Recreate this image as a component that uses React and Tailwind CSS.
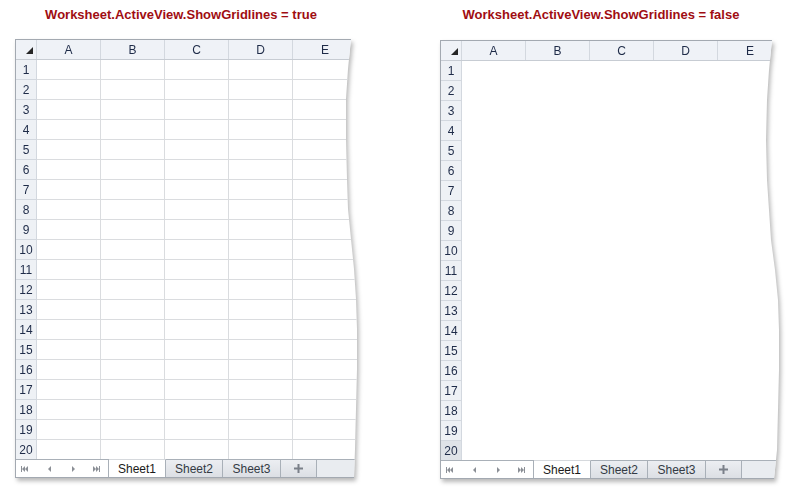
const COLS = ['A', 'B', 'C', 'D', 'E'];
const ROWS = Array.from({ length: 20 }, (_, i) => i + 1);

const CLIP_LEFT =
  '[clip-path:polygon(0_0,336px_0,333px_30px,331px_60px,331px_100px,332px_140px,333px_170px,336px_200px,339px_230px,341px_260px,342px_290px,342px_330px,341px_370px,340px_410px,339px_439px,0_439px)]';
const CLIP_RIGHT =
  '[clip-path:polygon(0_0,332px_0,329px_30px,327px_60px,326px_100px,327px_140px,329px_170px,331px_200px,335px_230px,338px_260px,339px_290px,339px_330px,338px_370px,337px_410px,334px_439px,0_439px)]';

function NavIcon({ kind }) {
  // tiny grey arrows of the sheet tab scroller
  return (
    <svg width="7" height="6" viewBox="0 0 7 6" fill="#8b8f96">
      {kind === 'first' && (
        <>
          <rect x="0" y="0" width="1" height="6" />
          <path d="M1 3 4 0v6z" />
          <path d="M4 3 7 0v6z" />
        </>
      )}
      {kind === 'prev' && <path d="M2 3 5 0v6z" />}
      {kind === 'next' && <path d="M2 0 5 3 2 6z" />}
      {kind === 'last' && (
        <>
          <path d="M0 0 3 3 0 6z" />
          <path d="M3 0 6 3 3 6z" />
          <rect x="6" y="0" width="1" height="6" />
        </>
      )}
    </svg>
  );
}

function Sheet({ gridlines }) {
  return (
    <div className="drop-shadow-[2px_3px_2px_rgba(0,0,0,0.28)]">
      <div
        className={
          (gridlines ? CLIP_LEFT : CLIP_RIGHT) +
          " w-[350px] border border-[#a3a9b1] bg-white overflow-hidden font-['Liberation_Sans',Arial,sans-serif] text-[12px] text-[#1e2b48]"
        }
      >
        {/* column header */}
        <div className="flex h-[20px] border-b border-[#c7ccd3] bg-[#eff2f7]">
          <div className="w-[21px] border-r border-[#d3d8df] flex items-end justify-end pr-[3px] pb-[5px]">
            <svg width="7" height="7" viewBox="0 0 7 7">
              <path d="M0 7 7 0v7z" fill="#262626" />
            </svg>
          </div>
          {COLS.map((c, i) => (
            <div
              key={c}
              className={
                i < 4
                  ? 'w-[64px] border-r border-[#d3d8df] flex items-center justify-center'
                  : 'w-[64px] flex items-center justify-center'
              }
            >
              {c}
            </div>
          ))}
        </div>

        {ROWS.map((r) => {
          const last = r === 20;
          const active = !gridlines && last;
          return (
            <div key={r} className={last ? 'flex h-[19px]' : 'flex h-[20px]'}>
              <div
                className={
                  (active ? 'bg-[#dfe3e8] ' : 'bg-[#eef1f5] ') +
                  (last ? '' : 'border-b ') +
                  'w-[21px] border-r border-[#d3d8df] flex items-center justify-center'
                }
              >
                {r}
              </div>
              {COLS.map((c, i) => (
                <div
                  key={c}
                  className={
                    gridlines
                      ? (last ? '' : 'border-b ') + (i < 4 ? 'border-r ' : '') + 'w-[64px] border-[#dadcdf]'
                      : 'w-[64px]'
                  }
                />
              ))}
            </div>
          );
        })}

        {/* sheet tabs */}
        <div className="flex h-[18px] bg-[#e9ecf0]">
          <div className="w-[93px] border-t border-r border-[#a9b0b8] bg-white flex items-center">
            <div className="ml-[5px]"><NavIcon kind="first" /></div>
            <div className="ml-[18px]"><NavIcon kind="prev" /></div>
            <div className="ml-[17px]"><NavIcon kind="next" /></div>
            <div className="ml-[16px]"><NavIcon kind="last" /></div>
          </div>
          <div className="w-[57px] border-t border-r border-t-[#d6d9dd] border-r-[#a9b0b8] bg-white flex items-center justify-center text-[#1a1a1a]">
            Sheet1
          </div>
          <div className="w-[57px] border-t border-r border-[#a9b0b8] bg-gradient-to-b from-[#eceef2] to-[#dcdfe4] flex items-center justify-center text-[#333a44]">
            Sheet2
          </div>
          <div className="w-[58px] border-t border-r border-[#a9b0b8] bg-gradient-to-b from-[#eceef2] to-[#dcdfe4] flex items-center justify-center text-[#333a44]">
            Sheet3
          </div>
          <div className="w-[36px] border-t border-r border-[#a9b0b8] bg-gradient-to-b from-[#eceef2] to-[#dcdfe4] flex items-center justify-center">
            <svg width="9" height="9" viewBox="0 0 9 9" fill="#7b8089">
              <rect x="3.5" y="0" width="2" height="9" />
              <rect x="0" y="3.5" width="9" height="2" />
            </svg>
          </div>
          <div className="flex-1 border-t border-[#a9b0b8]" />
        </div>
      </div>
    </div>
  );
}

export default function App() {
  return (
    <div className="w-[791px] h-[494px] bg-white flex">
      <div className="ml-[15px] w-[345px] flex flex-col">
        <div className="w-[332px] h-[39px] pt-[5px] text-center font-['Liberation_Sans',Arial,sans-serif] font-bold text-[13px] text-[#a00d12]">
          Worksheet.ActiveView.ShowGridlines = true
        </div>
        <Sheet gridlines />
      </div>
      <div className="ml-[80px] w-[345px] flex flex-col">
        <div className="w-[322px] h-[40px] pt-[5px] text-center font-['Liberation_Sans',Arial,sans-serif] font-bold text-[13px] text-[#a00d12]">
          Worksheet.ActiveView.ShowGridlines = false
        </div>
        <Sheet gridlines={false} />
      </div>
    </div>
  );
}
